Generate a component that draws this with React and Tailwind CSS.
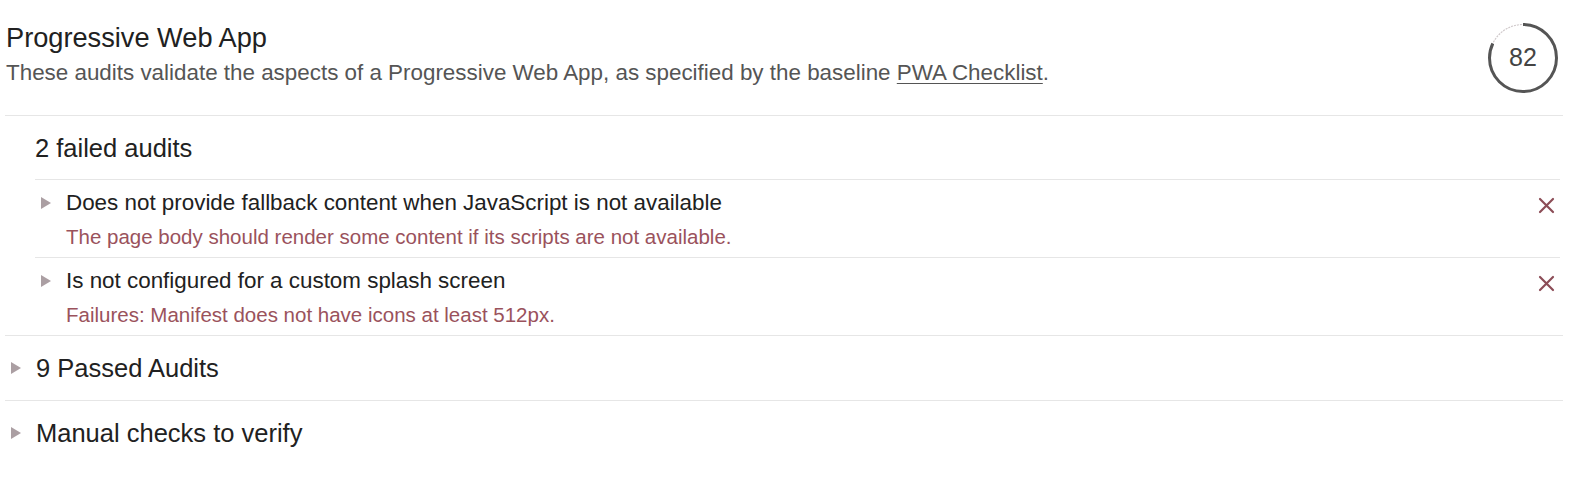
import React from "react";

const Arrow = ({ className = "" }) => (
  <svg width="10" height="12" viewBox="0 0 10 12" className={className}>
    <polygon points="0,0 10,6 0,12" fill="#ab9fa3" />
  </svg>
);

const Cross = () => (
  <svg width="17" height="17" viewBox="0 0 17 17" className="shrink-0">
    <path d="M2 2 L15 15 M15 2 L2 15" stroke="#8c4d57" strokeWidth="2.2" strokeLinecap="round" />
  </svg>
);

const Gauge = ({ score }) => {
  const r = 33.5;
  const c = 2 * Math.PI * r;
  return (
    <div className="relative w-[70px] h-[70px] mt-[23px] mr-[5px] shrink-0">
      <svg width="70" height="70" viewBox="0 0 70 70" className="-rotate-90">
        <circle cx="35" cy="35" r={r} fill="none" stroke="#cfc8ca" strokeWidth="1.2" strokeDasharray="2 1" />
        <circle
          cx="35"
          cy="35"
          r={r}
          fill="none"
          stroke="#555555"
          strokeWidth="3"
          strokeDasharray={`${(c * score) / 100} ${c}`}
        />
      </svg>
      <div className="absolute inset-0 flex items-center justify-center text-[25px] text-[#444]">
        {score}
      </div>
    </div>
  );
};

const FailedAudit = ({ title, desc }) => (
  <div className="flex items-start border-t border-[#e6e6e6] pt-[10px] pb-[8px] pr-[5px]">
    <Arrow className="mt-[7px] ml-[6px] mr-[15px] shrink-0" />
    <div className="flex-1">
      <div className="text-[22.4px] leading-[26px] text-[#212121]">{title}</div>
      <div className="mt-[9px] text-[20.5px] leading-[24px] text-[#9a525c]">{desc}</div>
    </div>
    <div className="mt-[7px]">
      <Cross />
    </div>
  </div>
);

const Collapsed = ({ label }) => (
  <div className="flex items-center border-t border-[#e6e6e6] pt-[17px] pb-[17px]">
    <Arrow className="ml-[6px] mr-[15px] shrink-0" />
    <div className="text-[25.5px] leading-[30px] text-[#212121]">{label}</div>
  </div>
);

export default function App() {
  return (
    <div
      className="bg-white min-h-[491px] pl-[5px]"
      style={{ fontFamily: '"Liberation Sans", Arial, sans-serif' }}
    >
      <div className="w-[1558px]">
        {/* header */}
        <div className="flex justify-between h-[116px] border-b border-[#e6e6e6]">
          <div className="pt-[22px] pl-[1px]">
            <h1 className="text-[27.2px] leading-[32px] text-[#212121]">Progressive Web App</h1>
            <p className="mt-[6px] text-[22.4px] leading-[26px] text-[#555]">
              These audits validate the aspects of a Progressive Web App, as specified by the baseline{" "}
              <span className="underline decoration-1 underline-offset-[3px]">PWA Checklist</span>.
            </p>
          </div>
          <Gauge score={82} />
        </div>

        {/* failed group */}
        <div className="ml-[30px] mr-[3px]">
          <div className="pt-[17px] pb-[16px] text-[25.5px] leading-[30px] text-[#212121]">2 failed audits</div>
          <FailedAudit
            title="Does not provide fallback content when JavaScript is not available"
            desc="The page body should render some content if its scripts are not available."
          />
          <FailedAudit
            title="Is not configured for a custom splash screen"
            desc="Failures: Manifest does not have icons at least 512px."
          />
        </div>

        <Collapsed label="9 Passed Audits" />
        <Collapsed label="Manual checks to verify" />
      </div>
    </div>
  );
}
